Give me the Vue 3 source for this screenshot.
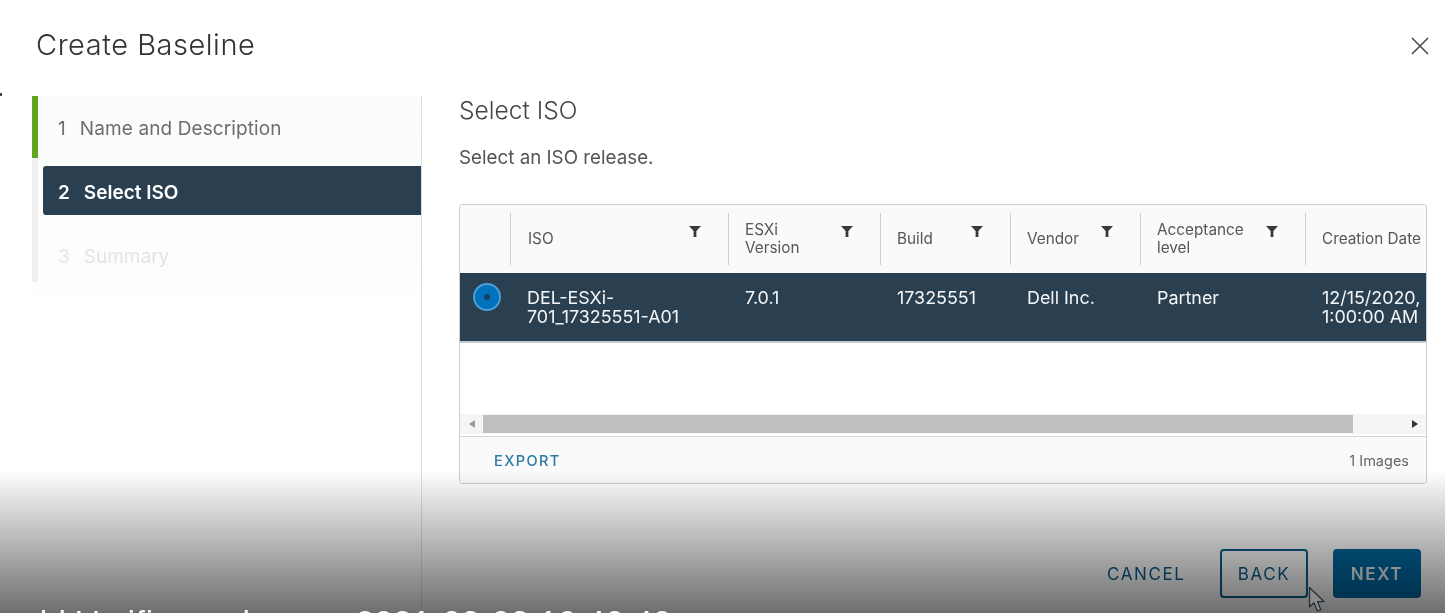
<script setup>
const columns = [
  { label: 'ISO', filter: true },
  { label: 'ESXi Version', filter: true },
  { label: 'Build', filter: true },
  { label: 'Vendor', filter: true },
  { label: 'Acceptance level', filter: true },
  { label: 'Creation Date', filter: false }
]
const cells = ['DEL-ESXi-\n701_17325551-A01', '7.0.1', '17325551', 'Dell Inc.', 'Partner', '12/15/2020,\n1:00:00 AM']
</script>

<template>
  <div class="page">
    <header class="head">
      <h1>Create Baseline</h1>
      <svg class="close" width="20" height="20" viewBox="0 0 20 20">
        <path d="M2 2 L18 18 M18 2 L2 18" stroke="#4a4a4a" stroke-width="1.6" fill="none" />
      </svg>
    </header>
    <div class="body">
      <nav class="side">
        <div class="step done"><div class="label"><b>1</b><span>Name and Description</span></div></div>
        <div class="step active"><div class="label"><b>2</b><span>Select ISO</span></div></div>
        <div class="step off"><div class="label"><b>3</b><span>Summary</span></div></div>
      </nav>
      <main class="main">
        <h2>Select ISO</h2>
        <p class="hint">Select an ISO release.</p>
        <section class="grid">
          <div class="tr th">
            <div class="radio-col"></div>
            <div v-for="c in columns" :key="c.label" class="hcell">
              <span class="hlabel">{{ c.label }}</span>
              <svg v-if="c.filter" class="filter" width="12" height="11" viewBox="0 0 12 11">
                <path d="M0 0 H12 L7.4 5 V11 H4.6 V5 Z" fill="#3a3a3a" />
              </svg>
            </div>
          </div>
          <div class="tr row">
            <div class="radio-col"><span class="radio"><i></i></span></div>
            <div v-for="(c, i) in cells" :key="i" class="cell">{{ c }}</div>
          </div>
          <div class="empty"></div>
          <div class="scroll">
            <span class="arrow left"></span>
            <div class="track"><div class="thumb"></div></div>
            <span class="arrow right"></span>
          </div>
          <footer class="gfoot">
            <span class="export">EXPORT</span>
            <span class="count">1 Images</span>
          </footer>
        </section>
        <div class="actions">
          <button class="btn link">CANCEL</button>
          <button class="btn outline">BACK</button>
          <button class="btn primary">NEXT</button>
        </div>
      </main>
    </div>
    <div class="shade"></div>
    <div class="speck"></div>
    <div class="caption"><span>ld Verifier and</span><span class="stamp">2021-03-03 10:40:40</span></div>
    <svg class="cursor" width="20" height="28" viewBox="0 0 20 28">
      <path d="M1.5 1.5 V21 L6 16.8 L9.4 25 L12.8 23.6 L9.6 15.6 H16 Z" fill="#8a8a8a" stroke="#1d2a33" stroke-width="1.2" stroke-linejoin="round" />
    </svg>
  </div>
</template>

<style>
html, body { margin: 0; background: #fff; overflow: hidden; }
</style>

<style scoped>
.page {
  position: relative;
  width: 1445px;
  height: 613px;
  overflow: hidden;
  background: #fff;
  font-family: Inter, "Noto Sans", sans-serif;
  color: #565656;
  display: flex;
  flex-direction: column;
  filter: blur(0.35px);
}
.head {
  height: 96px;
  flex: none;
  display: flex;
  justify-content: space-between;
  align-items: flex-start;
  padding: 27px 15px 0 36px;
  box-sizing: border-box;
}
h1 {
  margin: 0;
  font-size: 29px;
  line-height: 36px;
  font-weight: 300;
  color: #333;
  letter-spacing: 0.53px;
}
.close { margin-top: 9px; }
.body { flex: 1; display: flex; min-height: 0; }
.side {
  width: 389px;
  margin-left: 32px;
  flex: none;
  border-right: 1px solid #dde0e2;
  background: linear-gradient(#fafbfc, #fdfdfd 190px, #fff 200px);
}
.step {
  height: 64px;
  width: 100%;
  box-sizing: border-box;
  display: flex;
  align-items: flex-start;
  border-left: 6px solid #f0f0f0;
}
.step.done { border-left-color: #62a420; height: 62px; }
.step.off { height: 60px; }
.label {
  flex: 1;
  height: 49px;
  margin-top: 8px;
  margin-left: 5px;
  padding-left: 15px;
  box-sizing: border-box;
  display: flex;
  align-items: center;
  gap: 14px;
  font-size: 19px;
  letter-spacing: 0.1px;
  border-radius: 3px 0 0 3px;
}
.label b { font-weight: 400; }
.done .label { color: #6d6d6d; }
.active .label {
  background: #2a3f50;
  color: #fff;
  font-weight: 600;
  padding-top: 3px;
  letter-spacing: 0;
}
.active .label b { font-weight: 600; }
.off .label { color: #e4e4e4; margin-top: 10px; letter-spacing: 0; }
.main {
  flex: 1;
  min-width: 0;
  display: flex;
  flex-direction: column;
  padding: 0 18px 0 37px;
}
h2 {
  margin: -1px 0 0;
  font-size: 24.6px;
  line-height: 30px;
  font-weight: 300;
  color: #444;
}
.hint {
  margin: 21px 0 0;
  font-size: 18.8px;
  line-height: 24px;
  color: #555;
  font-weight: 400;
}
.grid {
  margin-top: 34px;
  width: 968px;
  height: 280px;
  flex: none;
  box-sizing: border-box;
  border: 1px solid #cfcfcf;
  border-radius: 3px;
  display: flex;
  flex-direction: column;
  overflow: hidden;
  background: #fff;
}
.tr {
  display: grid;
  grid-template-columns: 50px 218px 152px 130px 130px 165px 121px;
}
.th {
  height: 68px;
  background: #fafafa;
  padding: 8px 0;
  box-sizing: border-box;
  flex: none;
}
.hcell {
  position: relative;
  border-left: 1px solid #cdcdcd;
  display: flex;
  align-items: center;
  padding-left: 16px;
  padding-right: 60px;
  font-size: 15.3px;
  line-height: 18px;
  color: #565656;
  white-space: normal;
}
.hcell:nth-child(2) { padding-left: 17px; }
.hcell:last-child { padding-right: 0; white-space: nowrap; }
.filter { position: absolute; right: 27px; top: 13px; }
.row {
  height: 70px;
  background: #2a3f50;
  color: #f4f6f7;
  flex: none;
  border-bottom: 2px solid #c4cbd0;
  box-sizing: border-box;
}
.radio-col { display: flex; justify-content: center; }
.row .radio-col { padding-top: 10px; justify-content: flex-start; padding-left: 13px; }
.radio {
  width: 28px;
  height: 28px;
  box-sizing: border-box;
  border-radius: 50%;
  background: #0072bc;
  border: 2px solid #4a9fd6;
  display: flex;
  align-items: center;
  justify-content: center;
}
.radio i { width: 6px; height: 6px; border-radius: 50%; background: #17405f; }
.cell {
  padding: 15px 0 0 17px;
  font-size: 17.9px;
  line-height: 19px;
  white-space: pre-line;
}
.empty { flex: 1; }
.scroll {
  height: 20px;
  flex: none;
  display: flex;
  align-items: center;
  background: #f5f5f5;
  padding: 0 8px 0 9px;
  gap: 8px;
}
.track { flex: 1; height: 18px; }
.thumb { width: 870px; height: 100%; background: #c0c0c0; }
.arrow { width: 0; height: 0; border-top: 4px solid transparent; border-bottom: 4px solid transparent; }
.arrow.left { border-right: 6px solid #9a9a9a; }
.arrow.right { border-left: 6px solid #333; }
.gfoot {
  flex: none;
  height: 47px;
  margin-top: 2px;
  border-top: 1px solid #d5d5d5;
  background: #fafafa;
  box-sizing: border-box;
  display: flex;
  align-items: center;
  justify-content: space-between;
  padding: 0 17px 0 34px;
}
.export { color: #2a7ba3; font-size: 14.5px; letter-spacing: 1.4px; font-weight: 500; }
.count { color: #666; font-size: 14.5px; }
.actions {
  margin-top: 65px;
  display: flex;
  justify-content: flex-end;
  gap: 25px;
  padding-right: 6px;
}
.btn {
  width: 88px;
  height: 49px;
  box-sizing: border-box;
  border-radius: 4px;
  font-family: inherit;
  font-size: 17px;
  letter-spacing: 1.6px;
  font-weight: 500;
  background: transparent;
  border: 2px solid transparent;
  padding: 0;
}
.link { color: #0b5c8a; margin-right: 12px; width: 78px; font-weight: 400; }
.outline { color: #0b5c8a; border-color: #0b5c8a; font-weight: 400; }
.primary { background: #00689f; border-color: #00689f; color: #e8eef2; font-weight: 600; }
.shade {
  position: absolute;
  left: 0;
  right: 0;
  top: 470px;
  height: 143px;
  background: linear-gradient(rgba(0,0,0,0), rgba(0,0,0,0.57));
  pointer-events: none;
}
.speck { position: absolute; left: 0; top: 93px; width: 2px; height: 3px; background: #444; }
.caption {
  position: absolute;
  left: 40px;
  top: 603px;
  color: #fff;
  font-size: 32px;
  line-height: 38px;
  font-family: "Liberation Sans", sans-serif;
  white-space: nowrap;
  letter-spacing: 1px;
}
.stamp { position: absolute; left: 316px; top: 0; }
.cursor { position: absolute; left: 1308px; top: 586px; }
</style>
